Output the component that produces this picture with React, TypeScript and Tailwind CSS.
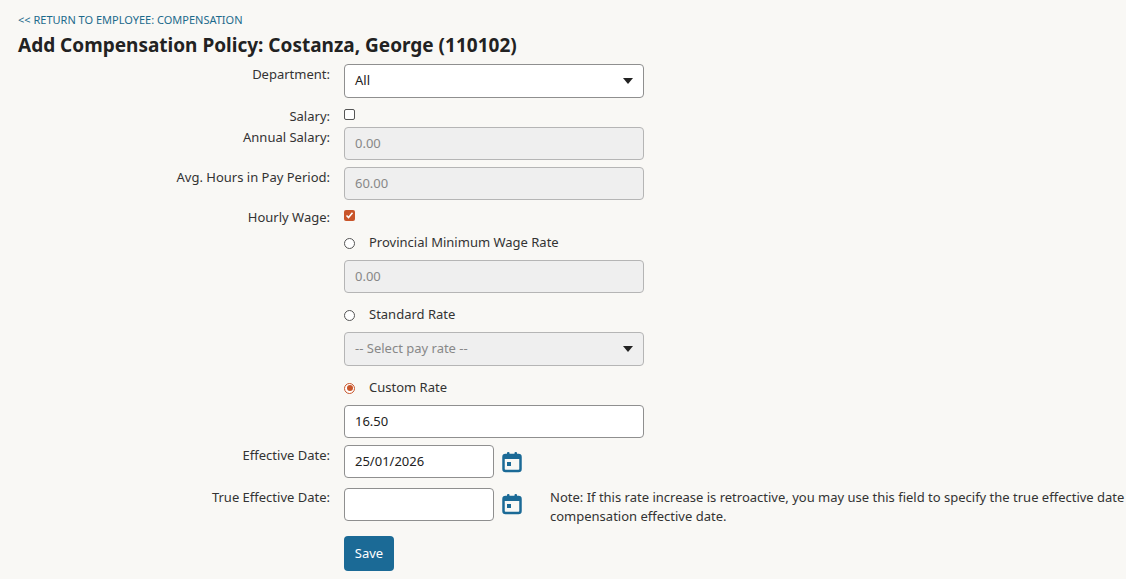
import React from 'react';

const F = "font-['Open_Sans',sans-serif]";

function Cal() {
  return (
    <svg width="20" height="22" viewBox="0 0 20 22" className="shrink-0">
      <rect x="1.5" y="4" width="17" height="16" rx="2" fill="none" stroke="#1b6a96" strokeWidth="2.5" />
      <rect x="1.5" y="4" width="17" height="4" fill="#1b6a96" />
      <rect x="5" y="1" width="2.5" height="5" rx="1" fill="#1b6a96" />
      <rect x="12.5" y="1" width="2.5" height="5" rx="1" fill="#1b6a96" />
      <rect x="5" y="11" width="4" height="4" fill="#1b6a96" />
    </svg>
  );
}

function Caret() {
  return <span className="ml-auto w-0 h-0 border-l-[5px] border-r-[5px] border-t-[6px] border-l-transparent border-r-transparent border-t-[#222]" />;
}

function Label({ children, pt = 'pt-[7px]' }: { children?: React.ReactNode; pt?: string }) {
  return <div className={`text-right text-[13px] text-[#333] ${pt}`}>{children}</div>;
}

function Box({ value, disabled, w = 'w-[300px]', h = 'h-[33px]' }: { value: string; disabled?: boolean; w?: string; h?: string }) {
  return (
    <div
      className={`${w} ${h} rounded border flex items-center px-[10px] text-[13px] ${
        disabled ? 'bg-[#efefef] border-[#b5b5b5] text-[#888]' : 'bg-white border-[#8f8f8f] text-[#222]'
      }`}
    >
      {value}
    </div>
  );
}

function Radio({ checked, label }: { checked?: boolean; label: string }) {
  return (
    <div className="flex items-center h-[18px] text-[13px] text-[#333]">
      <span className={`w-[11px] h-[11px] rounded-full border flex items-center justify-center bg-white ${checked ? 'border-[#c9552a]' : 'border-[#555]'}`}>
        {checked && <span className="w-[6px] h-[6px] rounded-full bg-[#c9552a]" />}
      </span>
      <span className="ml-[14px]">{label}</span>
    </div>
  );
}

export default function App() {
  return (
    <div className={`${F} bg-[#f9f8f5] w-[1126px] h-[579px] overflow-hidden px-[18px] pt-[13px]`}>
      <a className="block text-[11px] text-[#1c6a8c] leading-[14px]">&lt;&lt; RETURN TO EMPLOYEE: COMPENSATION</a>
      <h1 className="text-[19px] font-bold text-[#222] mt-[5px] leading-[26px]">Add Compensation Policy: Costanza, George (110102)</h1>
      <div className="grid grid-cols-[312px_1fr] gap-x-[14px] mt-[6px] items-start">
        <Label pt="pt-[1px]">Department:</Label>
        <div className="w-[300px] h-[34px] rounded border border-[#8f8f8f] bg-white flex items-center px-[10px] text-[13px] text-[#222]">
          All
          <Caret />
        </div>

        <Label pt="pt-[9px]">Salary:</Label>
        <div className="pt-[11px] pb-[7px]">
          <span className="block w-[11px] h-[11px] border border-[#555] rounded-[2px] bg-white" />
        </div>

        <Label pt="pt-[1px]">Annual Salary:</Label>
        <Box value="0.00" disabled />

        <Label pt="pt-[8px]">Avg. Hours in Pay Period:</Label>
        <div className="pt-[7px]"><Box value="60.00" disabled /></div>

        <Label pt="pt-[8px]">Hourly Wage:</Label>
        <div className="pt-[10px] flex flex-col gap-[8px]">
          <span className="w-[11px] h-[11px] rounded-[2px] bg-[#c9552a] flex items-center justify-center">
            <svg width="9" height="9" viewBox="0 0 9 9"><path d="M1.5 4.5L3.5 6.5L7.5 1.8" fill="none" stroke="white" strokeWidth="1.6" /></svg>
          </span>
          <div className="mt-[5px]"><Radio label="Provincial Minimum Wage Rate" /></div>
          <Box value="0.00" disabled />
          <div className="mt-[5px]"><Radio label="Standard Rate" /></div>
          <div className="w-[300px] h-[34px] rounded border border-[#b5b5b5] bg-[#efefef] flex items-center px-[10px] text-[13px] text-[#888]">
            -- Select pay rate --
            <Caret />
          </div>
          <div className="mt-[5px]"><Radio checked label="Custom Rate" /></div>
          <Box value="16.50" />
        </div>

        <Label pt="pt-[8px]">Effective Date:</Label>
        <div className="pt-[7px] flex items-center gap-[8px]">
          <Box value="25/01/2026" w="w-[150px]" />
          <Cal />
        </div>

        <Label pt="pt-[10px]">True Effective Date:</Label>
        <div className="pt-[10px] flex items-start gap-[8px]">
          <Box value="" w="w-[150px]" />
          <div className="pt-[5px]"><Cal /></div>
          <p className="ml-[20px] text-[13px] text-[#333] leading-[19px] whitespace-nowrap">
            Note: If this rate increase is retroactive, you may use this field to specify the true effective date
            <br />
            compensation effective date.
          </p>
        </div>

        <div />
        <div className="pt-[10px]">
          <button className="w-[50px] h-[35px] rounded bg-[#1b6a96] text-white text-[13px]">Save</button>
        </div>
      </div>
    </div>
  );
}
